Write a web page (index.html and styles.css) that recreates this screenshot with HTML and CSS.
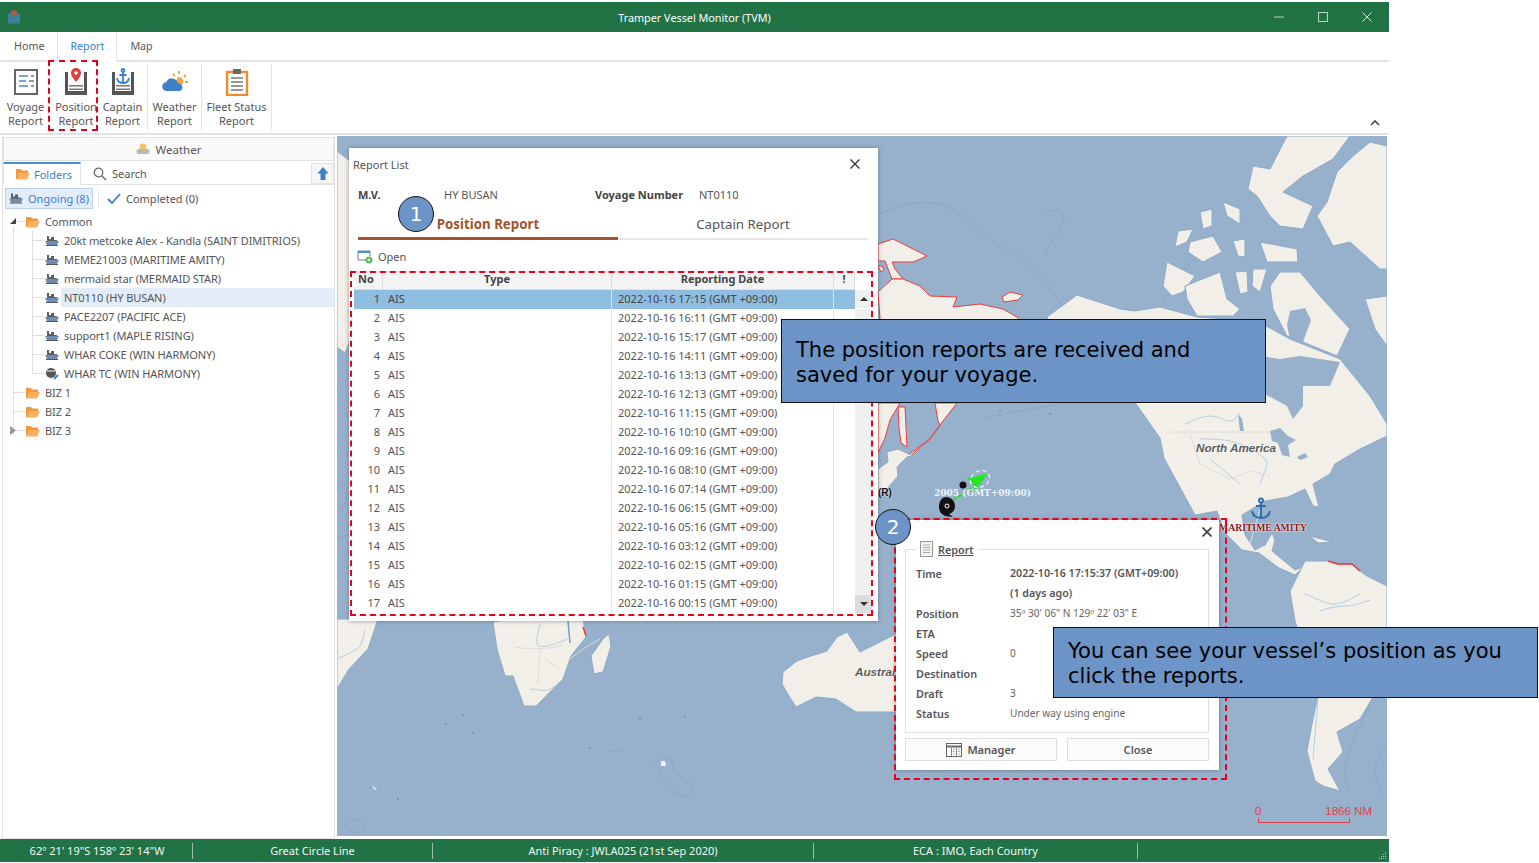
FILE: index.html
```html
<!DOCTYPE html>
<html lang="en">
<head>
<meta charset="utf-8">
<title>Tramper Vessel Monitor (TVM)</title>
<link rel="stylesheet" href="styles.css">
</head>
<body>
<svg class="defs" width="0" height="0" aria-hidden="true">
  <symbol id="folder" viewBox="0 0 14 12"><path d="M0 11V1h5l1 1.500h6V5H3.500L1 11z" fill="#f0993a"/><path d="M.5 11.500l3-6.500H14l-3 6.500z" fill="#fbb061"/></symbol>
  <symbol id="ship" viewBox="0 0 14 12"><path d="M2 1h2v3h2V2h3v3h3v2H2z" fill="#5a5f66"/><path d="M0 6h14l-2 4H2z" fill="#6f8db3"/><path d="M1 10h12v1H1z" fill="#555"/></symbol>
  <symbol id="book" viewBox="0 0 24 28"><path d="M1 4h3v19h16V4h3v23H1z" fill="#555"/><path d="M5 17h14v1.500H5zM5 20.500h14V22H5z" fill="#777"/></symbol>
</svg>
<div class="app">
  <header class="titlebar">
    <svg class="logo" width="14" height="16" viewBox="0 0 14 16"><path d="M1 5l3-1 3 2 3-2 3 1v10l-3-1-3 2-3-2-3 1z" fill="#3f7f97"/><circle cx="7" cy="4" r="3" fill="#b4574b"/></svg>
    <span class="titletext">Tramper Vessel Monitor (TVM)</span>
    <div class="winbtns">
      <svg width="12" height="12" viewBox="0 0 12 12"><path d="M1 6h10" stroke="#b9d3c4" stroke-width="1"/></svg>
      <svg width="12" height="12" viewBox="0 0 12 12"><rect x="1.500" y="1.500" width="9" height="9" fill="none" stroke="#b9d3c4"/></svg>
      <svg width="12" height="12" viewBox="0 0 12 12"><path d="M1.500 1.500l9 9M10.500 1.500l-9 9" stroke="#d4e3da"/></svg>
    </div>
  </header>
  <nav class="tabs">
    <span class="tab">Home</span>
    <span class="tab tab-active">Report</span>
    <span class="tab">Map</span>
  </nav>
  <section class="ribbon">
    <div class="rbtn rb-voyage">
      <svg width="26" height="28" viewBox="0 0 26 28"><rect x="2" y="2" width="22" height="24" fill="#fff" stroke="#666" stroke-width="2"/><path d="M6 8h9M6 13h7M6 18h9" stroke="#4e86c4" stroke-width="1.600"/><path d="M18 8h3M16 13h5M18 18h3" stroke="#777" stroke-width="1.600"/></svg>
      <span>Voyage<br>Report</span>
    </div>
    <div class="rbtn rb-position">
      <svg width="26" height="28" viewBox="0 0 24 28"><use href="#book"/><path d="M12 0c3 0 5 2.200 5 5 0 3.500-5 9-5 9s-5-5.500-5-9c0-2.800 2-5 5-5z" fill="#e0413c"/><circle cx="12" cy="5" r="1.800" fill="#fff"/></svg>
      <span>Position<br>Report</span>
    </div>
    <div class="rbtn rb-captain sep">
      <svg width="26" height="28" viewBox="0 0 24 28"><use href="#book"/><g fill="none" stroke="#3a80c8" stroke-width="1.800"><circle cx="12" cy="2.500" r="1.500"/><path d="M12 4v11M8.500 7h7M6 10c.5 3 3 5 6 5s5.500-2 6-5"/></g></svg>
      <span>Captain<br>Report</span>
    </div>
    <div class="rbtn rb-weather sep">
      <svg width="28" height="24" viewBox="0 0 28 24"><path d="M17 7a5 5 0 0 1 5 7h-9z" fill="#f5a243"/><path d="M18 1v3M25 5l-2 2M27 12h-3M12 4l2 2" stroke="#f5a243" stroke-width="1.800"/><path d="M6 21a4.500 4.500 0 0 1-.6-9 6 6 0 0 1 11.400 1.200 4 4 0 0 1 1.700 7.800z" fill="#3f82c4"/></svg>
      <span>Weather<br>Report</span>
    </div>
    <div class="rbtn rb-fleet sep">
      <svg width="26" height="28" viewBox="0 0 26 28"><rect x="3" y="4" width="20" height="23" fill="#fff" stroke="#f08c2e" stroke-width="2.400"/><path d="M9 1h8v5H9z" fill="#666"/><path d="M7 10h12M7 14h12M7 18h12M7 22h12" stroke="#777" stroke-width="1.400"/></svg>
      <span>Fleet Status<br>Report</span>
    </div>
    <svg class="collapse" width="10" height="6" viewBox="0 0 10 6"><path d="M1 5l4-4 4 4" fill="none" stroke="#444" stroke-width="1.600"/></svg>
  </section>

  <main class="main">
    <aside class="panel">
      <div class="weatherbtn">
        <svg width="14" height="14" viewBox="0 0 14 14"><circle cx="7" cy="5" r="3.500" fill="#f4c668"/><path d="M3 12a2.500 2.500 0 0 1 0-5h8a2.500 2.500 0 0 1 0 5z" fill="#b9b9b3"/></svg>
        <span>Weather</span>
      </div>
      <div class="paneltabs">
        <div class="ptab ptab-active"><svg width="14" height="12"><use href="#folder"/></svg><span>Folders</span></div>
        <div class="ptab"><svg width="14" height="14" viewBox="0 0 14 14"><circle cx="5.500" cy="5.500" r="4.300" fill="none" stroke="#666" stroke-width="1.200"/><path d="M8.700 8.700L13 13" stroke="#666" stroke-width="1.400"/></svg><span>Search</span></div>
        <div class="upbtn"><svg width="12" height="13" viewBox="0 0 12 13"><path d="M6 0l5.500 6.500H8.500V13h-5V6.500H.5z" fill="#3d80c4"/></svg></div>
      </div>
      <div class="filters">
        <div class="fbtn fbtn-on"><svg width="14" height="13"><use href="#ship"/></svg><span>Ongoing (8)</span></div>
        <i class="fsep"></i>
        <div class="fbtn"><svg width="14" height="11" viewBox="0 0 14 11"><path d="M1 6l4 4 8-9" fill="none" stroke="#3d7fc2" stroke-width="1.800"/></svg><span>Completed (0)</span></div>
      </div>
      <ul class="tree">
        <li class="node folder"><i class="exp exp-open"></i><svg width="14" height="12"><use href="#folder"/></svg><span>Common</span></li>
        <li class="node leaf"><svg width="14" height="12"><use href="#ship"/></svg><span>20kt metcoke Alex - Kandla (SAINT DIMITRIOS)</span></li>
        <li class="node leaf"><svg width="14" height="12"><use href="#ship"/></svg><span>MEME21003 (MARITIME AMITY)</span></li>
        <li class="node leaf"><svg width="14" height="12"><use href="#ship"/></svg><span>mermaid star (MERMAID STAR)</span></li>
        <li class="node leaf selected"><svg width="14" height="12"><use href="#ship"/></svg><span>NT0110 (HY BUSAN)</span></li>
        <li class="node leaf"><svg width="14" height="12"><use href="#ship"/></svg><span>PACE2207 (PACIFIC ACE)</span></li>
        <li class="node leaf"><svg width="14" height="12"><use href="#ship"/></svg><span>support1 (MAPLE RISING)</span></li>
        <li class="node leaf"><svg width="14" height="12"><use href="#ship"/></svg><span>WHAR COKE (WIN HARMONY)</span></li>
        <li class="node leaf last"><svg width="14" height="13" viewBox="0 0 14 13"><circle cx="6" cy="6" r="5" fill="#555"/><path d="M2 4h8" stroke="#fff"/><path d="M9 12l4-4" stroke="#3d80c4" stroke-width="2"/></svg><span>WHAR TC (WIN HARMONY)</span></li>
        <li class="node folder"><svg width="14" height="12"><use href="#folder"/></svg><span>BIZ 1</span></li>
        <li class="node folder"><svg width="14" height="12"><use href="#folder"/></svg><span>BIZ 2</span></li>
        <li class="node folder"><i class="exp exp-closed"></i><svg width="14" height="12"><use href="#folder"/></svg><span>BIZ 3</span></li>
      </ul>
    </aside>

    <section class="map">
      <svg class="mapsvg" viewBox="337 137 1050 700" width="1050" height="700">
        <rect x="337" y="137" width="1050" height="700" fill="#97b1cc"/>
        <g fill="none" stroke="#8ba7c6" stroke-width="1">
          <path d="M880 215c30-15 60-15 80 0s25 25 55 40 45 55 65 75c30 5 60 10 70-5s30-55 55-75"/>
          <path d="M1045 215c15-10 25 0 15 15s-12 20-15 25"/>
          <path d="M987 418l45-8 45-8"/>
          <path d="M337 480c15 5 10 20 5 30M337 540l12-5"/>
          <path d="M655 765c10-12 20-5 18 8 15 8 25 18 18 25-15 2-25-10-36-33zM608 752h14M345 825c5-8 20-5 20 3s-15 8-20-3z"/>
          <path d="M1350 790c-15-25 10-60 20-85M1387 745c-15 20-15 30-5 50"/>
        </g>
        <g class="land">
          <path d="M337 152l13 10v180l-5 12-8-6z"/>
          <path d="M337 620h41l-10 30-19 20-12 20z"/>
          <path d="M509 620h74l3 18-15 19-8 23-27 27h-12l-11-30-8 0-8-27-4-27z"/>
          <path d="M609 635l2 12-8 26-9 2-3-18 12-17z"/>
          <path d="M783 673l-1 12 7 12 7 11 20-10 20 2 20 13h44v-80l-40 20-13-20-10 5-10 14-16 5-14 5z"/>
          <path d="M1047 318l30-22 43 14 15 2 25-4 37 10 60 4 33 18 50 20 30 37 17 28v12l-27 13-25 15-5 10-17 10 6 23-6-1-8-17-17 8-23 4-23 14 3 20 10 15 10-5 7-12 3 7-3 11 23 19 10-4-10 9-16-7-20-15-17-3-17-17-8-22-22 4-13-24-18-33-4-20-26-37-60-20z"/>
          <path d="M1310 537l23 6-15 1z"/>
          <path d="M1328 562l10 3h14l8 7 7 5 20 10v110l-14 1-13 22-23 13 6 20-15 17 12 22-17-5-8-5-8-30 5-27 7-33-24-70-5-30 15-30z"/>
          <path d="M1167 263l28 14-12 16-11 4-9-10z"/>
          <path d="M1185 287l35-14 7 27 13 10-7 7h-36l-10-17z"/>
          <path d="M1235 273l12-1 1 21-8 2z"/>
          <path d="M1253 270h14l-7 23-8-6z"/>
          <path d="M1260 243l37 7 1 13h-31z"/>
          <path d="M1233 242l12-2v18l-7-1z"/>
          <path d="M1190 243l23-6 9 16-19 10-15-10z"/>
          <path d="M1178 232l15-2-6 13-12 5z"/>
          <path d="M1200 213l12-3v17l-9 3z"/>
          <path d="M1223 203l17 7v15l-13-8z"/>
          <path d="M1253 167l17 3 17-33h63l-17 23-30 17-20 16 30 14-10 23-23-3-10-10-13-20-9-7z"/>
          <path d="M1317 217l16 30 17-4 30 27h7V147l-17-4-17 14-16 16-10 30z"/>
          <path d="M1280 273h20l20 24 30 33-13 27-34-14-16-6-14-27-3-23z"/>
          <path d="M1365 300l22-3v50l-12-17z"/>
        </g>
        <g fill="#97b1cc">
          <path d="M1261 357l19 3 20-3 40 6-10 24-27 0v20l-10 13-6-13-26-14z"/>
          <path d="M1290 312l15-3 6 12-8 22-13-2-3-15z"/>
          <path d="M1270 432l10-3 8 8 8 4-8 5 2 12-8-2-4-12-6-2zM1238 415l4 5 2 12-4 0zM1297 458l8-4 3 4-8 3z"/>
        </g>
        <g fill="none" stroke="#dedcd6" stroke-width="1">
          <path d="M1170 433h100M1190 435l10 30 30 15 20-8 20 5M1260 510l-10 35"/>
          <path d="M515 648c15 3 35 2 48-2M540 650c-2 12 0 24-3 35M600 640c-10 5-20 12-30 20M545 660c5 3 10 7 15 10"/>
        </g>
        <g fill="none" stroke="#b4cde6" stroke-width="1">
          <path d="M1185 425c8-3 16-8 25-8s14 5 20 5 6-5 10-8M1200 440c14 0 28 0 40 5s20 10 25 15-2 15-5 25M1210 460c10 8 20 17 30 25"/>
          <path d="M1320 612c8-3 16-5 25-5s17-3 25-6M1305 595c10 3 20 11 30 10s17-6 25-10"/>
          <path d="M540 625c-1 6-4 14-3 20s20 0 30-5M530 690c10 0 15 5 25-3"/>
          <path d="M1318 700c-2 20-3 40-5 60M337 660c7-3 14-7 20-10s6-14 8-20"/>
        </g>
        <path d="M568 622l2 22" stroke="#6d9fd4" stroke-width="1.500" fill="none"/>
        <g class="reach">
          <path d="M878 245l15-5 34 17-14 6-21 0 3 7 8 10-11 0-7-18h-7z"/>
          <path d="M878 293l14-13 11 0 17 7 10 10 27 1-4 10 27-3 23 5 14 8 4 5h-5l0 77h-130z"/>
          <path d="M1002 298l8-5 13 3-5 5-14 2z"/>
          <path d="M878 267h4l2 4-3 2z"/>
          <path d="M935 404h22l-7 9-10 13-2-4z"/>
          <path d="M878 404h22l-10 17-5 18-7 15z"/>
          <path d="M898 408h7l1 20 1 20-6-4-2-15z"/>
          <path d="M908 456l22-16 10-14-9 13-22 19z"/>
        </g>
        <path class="plainland" d="M898 450l15 7-6 1-10 10 1 9-11 13-9 5v-25l10-7-1-10z"/>
        <path d="M1328 562l10 3 14 0 8 7" fill="none" stroke="#e33" stroke-width="1.500"/>
        <path d="M583 628l3 9" fill="none" stroke="#e33" stroke-width="1.500"/>
        <g fill="#7c8a9c">
          <circle cx="463" cy="716" r="1"/><circle cx="446" cy="725" r="1"/><circle cx="473" cy="734" r="1"/><circle cx="590" cy="749" r="1"/><circle cx="640" cy="720" r="1"/><circle cx="685" cy="718" r="1"/><circle cx="371" cy="788" r=".8"/><circle cx="398" cy="800" r="1"/><circle cx="1050" cy="415" r="1"/><circle cx="1000" cy="412" r="1"/>
        </g>
        <path d="M371 786l6 4-2 1z" fill="#eee"/>
        <path d="M661 762l4 0 1 5-5 0z" fill="#eee"/>
      </svg>

      <span class="lbl lbl-na">North America</span>
      <span class="lbl lbl-au">Australia</span>
      <span class="vlbl vlbl-amity">MARITIME AMITY</span>
      <span class="vlbl-r">(R)</span>
      <svg class="anchor" width="22" height="24" viewBox="0 0 22 24"><g fill="none" stroke="#2f6fb0" stroke-width="2"><circle cx="11" cy="3.500" r="2"/><path d="M11 6v15M6 9h10M2 14c1 5 5 7 9 7s8-2 9-7"/></g></svg>
      <svg class="track" width="70" height="60" viewBox="0 0 70 60">
        <path d="M10 40L46 15" stroke="#1fe61f" stroke-width="2" stroke-dasharray="4 2" fill="none"/>
        <path d="M50 9L28 15l6 3 3 9z" fill="#22e822"/>
        <ellipse cx="42" cy="15" rx="10" ry="8" fill="none" stroke="#fff" stroke-dasharray="4 3" transform="rotate(-30 42 15)"/>
        <circle cx="25" cy="21" r="3.500" fill="#111"/>
        <path d="M8 33c5 0 9 4 9 9s-3 7-6 8l4 3-8-1c-4-2-6-5-6-9 0-6 3-10 7-10z" fill="#111"/>
        <circle cx="9" cy="42" r="2" fill="none" stroke="#fff"/>
      </svg>
      <span class="tracktext">2005 (GMT+09:00)</span>
      <div class="scale">
        <div class="scale-labels"><span>0</span><span>1866 NM</span></div>
        <i class="scale-bar"></i>
      </div>

      <div class="reportlist">
        <div class="rl-head"><span>Report List</span><svg width="10" height="10" viewBox="0 0 10 10"><path d="M.5.500l9 9M9.500.500l-9 9" stroke="#333" stroke-width="1.300"/></svg></div>
        <div class="rl-meta"><b class="m1">M.V.</b><span class="m2">HY BUSAN</span><b class="m3">Voyage Number</b><span>NT0110</span></div>
        <div class="rl-tabs"><span class="rl-tab rl-tab-on">Position Report</span><span class="rl-tab">Captain Report</span></div>
        <div class="rl-open"><svg width="16" height="14" viewBox="0 0 16 14"><path d="M10 10H1V1h12v5" fill="none" stroke="#6b7b8c"/><path d="M1 1h12v2H1z" fill="#4a90d0"/><circle cx="12" cy="10" r="3.500" fill="#5cb85c"/><path d="M10.500 10h3M12 8.500v3" stroke="#fff"/></svg><span>Open</span></div>
        <div class="grid">
          <div class="ghead"><span class="c-no">No</span><span class="c-type">Type</span><span class="c-date">Reporting Date</span><span class="c-flag">!</span></div>
          <div class="gbody">
            <div class="grows">
              <div class="grow grow-on"><span class="c-no">1</span><span class="c-type">AIS</span><span class="c-date">2022-10-16 17:15 (GMT +09:00)</span><span class="c-flag"></span></div>
              <div class="grow"><span class="c-no">2</span><span class="c-type">AIS</span><span class="c-date">2022-10-16 16:11 (GMT +09:00)</span><span class="c-flag"></span></div>
              <div class="grow"><span class="c-no">3</span><span class="c-type">AIS</span><span class="c-date">2022-10-16 15:17 (GMT +09:00)</span><span class="c-flag"></span></div>
              <div class="grow"><span class="c-no">4</span><span class="c-type">AIS</span><span class="c-date">2022-10-16 14:11 (GMT +09:00)</span><span class="c-flag"></span></div>
              <div class="grow"><span class="c-no">5</span><span class="c-type">AIS</span><span class="c-date">2022-10-16 13:13 (GMT +09:00)</span><span class="c-flag"></span></div>
              <div class="grow"><span class="c-no">6</span><span class="c-type">AIS</span><span class="c-date">2022-10-16 12:13 (GMT +09:00)</span><span class="c-flag"></span></div>
              <div class="grow"><span class="c-no">7</span><span class="c-type">AIS</span><span class="c-date">2022-10-16 11:15 (GMT +09:00)</span><span class="c-flag"></span></div>
              <div class="grow"><span class="c-no">8</span><span class="c-type">AIS</span><span class="c-date">2022-10-16 10:10 (GMT +09:00)</span><span class="c-flag"></span></div>
              <div class="grow"><span class="c-no">9</span><span class="c-type">AIS</span><span class="c-date">2022-10-16 09:16 (GMT +09:00)</span><span class="c-flag"></span></div>
              <div class="grow"><span class="c-no">10</span><span class="c-type">AIS</span><span class="c-date">2022-10-16 08:10 (GMT +09:00)</span><span class="c-flag"></span></div>
              <div class="grow"><span class="c-no">11</span><span class="c-type">AIS</span><span class="c-date">2022-10-16 07:14 (GMT +09:00)</span><span class="c-flag"></span></div>
              <div class="grow"><span class="c-no">12</span><span class="c-type">AIS</span><span class="c-date">2022-10-16 06:15 (GMT +09:00)</span><span class="c-flag"></span></div>
              <div class="grow"><span class="c-no">13</span><span class="c-type">AIS</span><span class="c-date">2022-10-16 05:16 (GMT +09:00)</span><span class="c-flag"></span></div>
              <div class="grow"><span class="c-no">14</span><span class="c-type">AIS</span><span class="c-date">2022-10-16 03:12 (GMT +09:00)</span><span class="c-flag"></span></div>
              <div class="grow"><span class="c-no">15</span><span class="c-type">AIS</span><span class="c-date">2022-10-16 02:15 (GMT +09:00)</span><span class="c-flag"></span></div>
              <div class="grow"><span class="c-no">16</span><span class="c-type">AIS</span><span class="c-date">2022-10-16 01:15 (GMT +09:00)</span><span class="c-flag"></span></div>
              <div class="grow"><span class="c-no">17</span><span class="c-type">AIS</span><span class="c-date">2022-10-16 00:15 (GMT +09:00)</span><span class="c-flag"></span></div>
            </div>
            <div class="gscroll">
              <i class="sb-btn sb-up"></i><i class="sb-track"></i><i class="sb-btn sb-down"></i>
            </div>
          </div>
        </div>
      </div>

      <div class="popup">
        <svg class="popclose" width="10" height="10" viewBox="0 0 10 10"><path d="M.5.500l9 9M9.500.500l-9 9" stroke="#444" stroke-width="1.800"/></svg>
        <fieldset class="pop-set">
          <legend><svg width="13" height="16" viewBox="0 0 13 16"><rect x=".5" y=".5" width="12" height="15" fill="#f4f4f4" stroke="#999"/><path d="M3 4h7M3 6.500h7M3 9h7M3 11.500h7" stroke="#aaa"/></svg><span>Report</span></legend>
          <dl class="pop-data">
            <dt>Time</dt><dd class="strong">2022-10-16 17:15:37 (GMT+09:00)</dd>
            <dt></dt><dd class="strong">(1 days ago)</dd>
            <dt>Position</dt><dd>35º 30' 06" N 129º 22' 03" E</dd>
            <dt>ETA</dt><dd></dd>
            <dt>Speed</dt><dd>0</dd>
            <dt>Destination</dt><dd></dd>
            <dt>Draft</dt><dd>3</dd>
            <dt>Status</dt><dd>Under way using engine</dd>
          </dl>
        </fieldset>
        <div class="pop-btns">
          <div class="pbtn pbtn-mgr"><svg width="16" height="14" viewBox="0 0 16 14"><rect x=".5" y=".5" width="15" height="13" fill="#fff" stroke="#666"/><path d="M.5 3.500h15" stroke="#666" stroke-width="2"/><path d="M5.500 3v10M10.500 3v10" stroke="#888"/><path d="M7 6h2M7 8.500h2M7 11h2M12 6h2M12 8.500h2M12 11h2" stroke="#8fb2d8"/></svg><span>Manager</span></div>
          <div class="pbtn pbtn-close"><span>Close</span></div>
        </div>
      </div>
    </section>
  </main>

  <footer class="status">
    <span class="s1">62º 21' 19"S 158º 23' 14"W</span>
    <span class="s2">Great Circle Line</span>
    <span class="s3">Anti Piracy : JWLA025 (21st Sep 2020)</span>
    <span class="s4">ECA : IMO, Each Country</span>
    <svg class="grip" width="8" height="8" viewBox="0 0 8 8"><path d="M6 0h1v1H6zM4 2h1v1H4zM6 2h1v1H6zM2 4h1v1H2zM4 4h1v1H4zM6 4h1v1H6zM0 6h1v1H0zM2 6h1v1H2zM4 6h1v1H4zM6 6h1v1H6z" fill="#a9c7b6"/></svg>
  </footer>

  <i class="dash dash-ribbon"></i>
  <i class="dash dash-grid"></i>
  <i class="dash dash-popup"></i>
  <span class="num num1">1</span>
  <span class="num num2">2</span>
  <p class="callout callout1">The position reports are received and saved for your voyage.</p>
  <p class="callout callout2">You can see your vessel’s position as you click the reports.</p>
</div>
</body>
</html>
```

FILE: styles.css
```css
* { box-sizing: border-box; }
html, body { margin: 0; padding: 0; background: #fff; }
body { font-family: "Noto Sans", "Open Sans", sans-serif; font-size: 11px; color: #555; overflow: hidden; }
.defs { position: absolute; }
.app { position: relative; width: 1389px; height: 862px; display: flex; flex-direction: column; }

.titlebar { margin-top: 2px; height: 30px; flex: none; background: #217346; display: flex; align-items: center; padding-left: 7px; position: relative; color: #fff; }
.titletext { flex: 1; text-align: center; margin-left: -21px; font-size: 10.800px; }
.logo { flex: none; }
.winbtns { position: absolute; right: 16px; top: 9px; display: flex; gap: 32px; }

.tabs { height: 30px; flex: none; display: flex; border-bottom: 2px solid #e4e4e4; padding-left: 1px; }
.tab { padding: 7px 13px 0; height: 30px; color: #555; font-size: 10.700px; }
.tab-active { color: #3c7fc8; background: #fff; border-left: 1px solid #e4e4e4; border-right: 1px solid #e4e4e4; padding: 7px 12px 0; margin: 0; }

.ribbon { height: 73px; flex: none; display: flex; border-bottom: 2px solid #e4e4e4; position: relative; padding-top: 2px; }
.rbtn { display: flex; flex-direction: column; align-items: center; text-align: center; line-height: 13.500px; font-size: 11px; padding-top: 4px; height: 66px; flex: none; }
.rbtn svg { height: 28px; margin-bottom: 4px; flex: none; }
.rb-voyage { width: 51px; }
.rb-position { width: 50px; }
.rb-captain { width: 47px; padding-right: 3px; }
.rb-weather { width: 54px; }
.rb-fleet { width: 70px; }
.sep { border-right: 1px solid #e4e4e4; }
.collapse { position: absolute; right: 9px; top: 58px; }

.main { flex: 1; display: flex; min-height: 0; padding-left: 2px; }
.panel { width: 333px; flex: none; border: 1px solid #e2e2e2; border-top: 0; margin-top: 1px; display: flex; flex-direction: column; }
.weatherbtn { height: 24px; flex: none; margin-top: 1px; border: 1px solid #e2e2e2; background: #fafafa; display: flex; align-items: center; justify-content: center; gap: 6px; color: #555; font-size: 11.500px; }
.paneltabs { height: 23px; flex: none; margin-top: 1px; display: flex; border-bottom: 1px solid #e2e2e2; position: relative; }
.ptab { display: flex; align-items: center; gap: 5px; padding: 0 10px 0 12px; font-size: 11px; height: 23px; }
.ptab svg, .fbtn svg { flex: none; }
.ptab-active { color: #3c7fc8; border: 1px solid #e2e2e2; border-top: 2px solid #4a90d9; border-bottom: 1px solid #fff; width: 78px; gap: 4px; }
.upbtn { position: absolute; right: 0; top: 1px; width: 23px; height: 21px; background: #f6f6f6; border: 1px solid #e2e2e2; display: flex; align-items: center; justify-content: center; }
.filters { height: 26px; flex: none; display: flex; align-items: center; padding: 0 2px; gap: 5px; }
.fbtn { display: flex; align-items: center; gap: 5px; padding: 0 3px; height: 21px; font-size: 11px; white-space: nowrap; }
.fbtn-on { background: #e3ecf9; border: 1px solid #bcd2ec; color: #3c7fc8; gap: 5px; }
.fsep { width: 1px; height: 17px; background: #e2e2e2; }

.tree { list-style: none; margin: 1px 0 0; padding: 0; position: relative; }
.tree::before { content: ""; position: absolute; left: 10px; top: 14px; height: 208px; border-left: 1px solid #dfdfdf; }
.node { height: 19px; display: flex; align-items: center; gap: 5px; position: relative; font-size: 11px; letter-spacing: -.08px; white-space: nowrap; }
.node::before { content: ""; position: absolute; top: 9px; border-top: 1px solid #dfdfdf; }
.folder { padding-left: 23px; }
.folder::before { left: 10px; width: 12px; }
.leaf { padding-left: 42px; }
.leaf::before { left: 29px; width: 12px; }
.leaf::after { content: ""; position: absolute; left: 29px; top: 0; height: 19px; border-left: 1px solid #dfdfdf; }
.leaf.last::after { height: 10px; }
.node svg { flex: none; }
.selected span { position: relative; }
.selected { background: linear-gradient(#e3ecf9, #e3ecf9) no-repeat 58px 0 / 100% 100%; }
.exp { position: absolute; left: 7px; top: 5px; z-index: 1; background: #fff; }
.exp-open { width: 0; height: 0; left: 7px; top: 6px; border-style: solid; border-width: 0 0 6px 6px; border-color: transparent transparent #444 transparent; background: none; }
.exp-closed { width: 6px; height: 9px; clip-path: polygon(0 0, 100% 50%, 0 100%); background: #999; }

.map { flex: 1; position: relative; margin: 1px 2px; overflow: visible; }
.mapsvg { display: block; }
.land path { fill: #f2efe9; stroke: #8dabca; stroke-width: 1; }
.reach path { fill: #f2efe9; stroke: #ee3b3b; stroke-width: 1; }
.plainland { fill: #f2efe9; stroke: #8dabca; stroke-width: 1; }

.lbl { position: absolute; font: italic bold 11.700px "Liberation Sans", sans-serif; color: #5c5c5c; text-shadow: 0 0 2px #fff; white-space: nowrap; }
.lbl-na { left: 859px; top: 305px; }
.lbl-au { left: 518px; top: 529px; }
.vlbl { position: absolute; font: bold 9.700px "Liberation Serif", serif; color: #8b1414; text-shadow: 0 0 2px #fff, 0 0 2px #fff; white-space: nowrap; left: 882px; }
.vlbl-amity { top: 386px; }
.vlbl-r { position: absolute; left: 541px; top: 351px; font: bold 10px "Liberation Sans", sans-serif; color: #111; text-shadow: 0 0 2px #fff; }
.anchor { position: absolute; left: 913px; top: 361px; }
.track { position: absolute; left: 601px; top: 328px; overflow: visible; }
.tracktext { position: absolute; left: 597px; top: 352px; font: bold 9px "DejaVu Serif", serif; color: #eef3f8; white-space: nowrap; }
.scale { position: absolute; left: 918px; top: 669px; width: 117px; color: #e0404a; font: 11.500px "Liberation Sans", sans-serif; }
.scale-labels { display: flex; justify-content: space-between; }
.scale-bar { display: block; margin: 1px 0 0 3px; width: 92px; height: 5px; border: 1px solid #e0404a; border-top: 0; }

.reportlist { position: absolute; left: 12px; top: 12px; width: 529px; height: 473px; background: #fff; box-shadow: 0 0 4px rgba(60,60,60,.5); padding: 0 5px; display: flex; flex-direction: column; font-size: 11px; }
.rl-head { height: 32px; display: flex; align-items: center; justify-content: space-between; padding: 0 13px 0 0; margin-left: -1px; color: #555; }
.rl-meta { display: flex; padding: 7px 0 0 4px; height: 29px; color: #555; }
.rl-meta b { color: #444; font-weight: 700; }
.m1 { width: 86px; }
.m2 { width: 151px; }
.m3 { width: 104px; }
.rl-tabs { display: flex; height: 31px; margin-left: 4px; width: 510px; border-bottom: 2px solid #e6e6e6; }
.rl-tab { width: 250px; text-align: center; font-size: 13.300px; padding-top: 6px; color: #555; height: 31px; }
.rl-tab-on { width: 260px; color: #a5532b; font-weight: 700; border-bottom: 3px solid #a5532b; }
.rl-open { display: flex; align-items: center; gap: 5px; height: 31px; padding: 2px 0 0 3px; color: #555; }
.grid { width: 518px; display: flex; flex-direction: column; }
.ghead { display: flex; height: 19px; background: #f4f4f4; border-top: 1px solid #e2e2e2; border-bottom: 1px solid #e2e2e2; color: #444; font-weight: 700; width: 501px; }
.ghead span { text-align: center; border-right: 1px solid #dcdcdc; line-height: 14px; }
.c-no { width: 29px; flex: none; }
.c-type { width: 229px; flex: none; }
.c-date { width: 222px; flex: none; }
.c-flag { width: 21px; flex: none; }
.ghead .c-no { text-align: left; padding-left: 4px; }
.gbody { display: flex; }
.grows { width: 501px; }
.grow { display: flex; height: 19px; align-items: center; color: #555; }
.grow span { height: 19px; line-height: 18px; border-right: 1px solid #e4e4e4; }
.grow .c-no { text-align: right; padding-right: 3px; border-right: 0; }
.grow .c-type { padding-left: 5px; }
.grow .c-date { padding-left: 6px; white-space: nowrap; }
.grow .c-flag { border-right: 0; }
.grow-on { background: #8fbde0; color: #444; }
.gscroll { width: 17px; display: flex; flex-direction: column; }
.sb-btn { display: block; height: 18px; background: #f0f0f0; position: relative; }
.sb-btn::after { content: ""; position: absolute; left: 5px; top: 7px; border: 4px solid transparent; border-top: 0; border-bottom: 4px solid #333; }
.sb-down { background: #dcdcdc; }
.sb-down::after { border-top: 4px solid #333; border-bottom: 0; }
.sb-track { flex: 1; display: block; background: #f0f0f0; margin-top: 1px; }

.popup { position: absolute; left: 559px; top: 384px; width: 323px; height: 250px; background: #fff; box-shadow: 0 0 4px rgba(60,60,60,.55); padding: 0 9px; font-size: 10.800px; }
.popclose { position: absolute; right: 7px; top: 7px; }
.pop-set { margin: 21px 0 0; padding: 0; border: 1px solid #dedede; height: 192px; width: 304px; min-width: 0; }
.pop-set legend { margin-left: 10px; padding: 0 4px; display: flex; align-items: center; gap: 5px; height: 16px; color: #555; font-weight: 600; }
.pop-set legend span { text-decoration: underline; }
.pop-data { display: grid; grid-template-columns: 94px 1fr; grid-auto-rows: 20px; margin: 9px 0 0 10px; }
.pop-data dt { color: #555; font-weight: 600; }
.pop-data dd { margin: 0; color: #666; font-size: 10.100px; line-height: 15px; }
.pop-data .strong { color: #555; font-weight: 600; font-size: 10.700px; }
.pop-btns { display: flex; gap: 10px; margin-top: 5px; }
.pbtn { height: 23px; border: 1px solid #dedede; background: #fbfbfb; display: flex; align-items: center; justify-content: center; gap: 5px; font-weight: 600; font-size: 11px; color: #555; }
.pbtn-mgr { width: 152px; }
.pbtn-close { width: 142px; }

.status { height: 23px; flex: none; background: #217346; color: #f2f7f3; display: flex; align-items: center; position: relative; font-size: 11px; padding-left: 2px; }
.status span { text-align: center; height: 16px; line-height: 16px; border-right: 1px solid #9dbfac; }
.s1 { width: 191px; }
.s2 { width: 240px; }
.s3 { width: 381px; }
.s4 { width: 324px; }
.grip { position: absolute; right: 2px; bottom: 2px; }

.dash { position: absolute; border: 2px dashed #e8001c; pointer-events: none; }
.dash-ribbon { left: 48px; top: 60px; width: 50px; height: 71px; }
.dash-grid { left: 350px; top: 271px; width: 523px; height: 345px; }
.dash-popup { left: 894px; top: 518px; width: 333px; height: 262px; }
.num { position: absolute; border: 1px solid #111; border-radius: 50%; background: #6c94c7; color: #fff; display: flex; align-items: center; justify-content: center; font-family: "DejaVu Sans", sans-serif; font-size: 20px; width: 36px; height: 36px; }
.num1 { left: 398px; top: 196px; }
.num2 { left: 875px; top: 509px; }
.callout { position: absolute; margin: 0; background: #6c94c7; border: 1px solid #111; color: #000; font-family: "DejaVu Sans", sans-serif; font-size: 21px; line-height: 25px; padding: 0 14px; display: flex; align-items: center; }
.callout1 { left: 781px; top: 319px; width: 485px; height: 84px; padding-top: 3px; }
.callout2 { left: 1053px; top: 627px; width: 485px; height: 71px; padding-top: 2px; }
```
